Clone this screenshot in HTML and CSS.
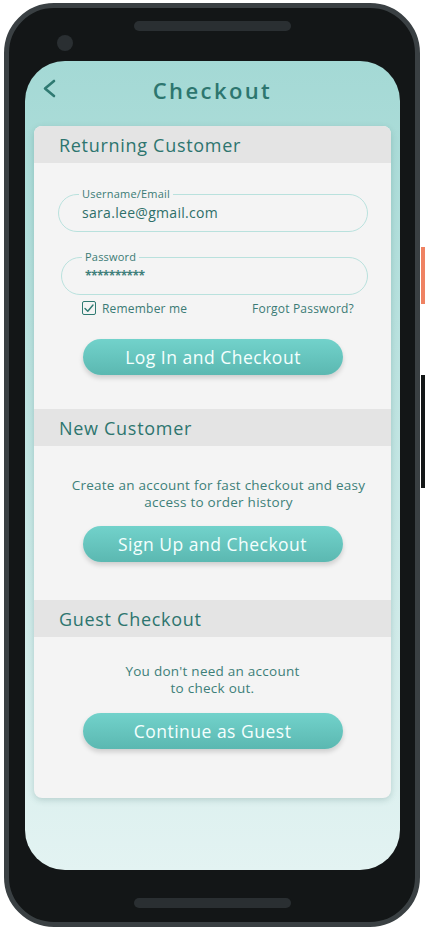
FILE: index.html
```html
<!DOCTYPE html>
<html lang="en">
<head>
<meta charset="utf-8">
<title>Checkout</title>
<link rel="stylesheet" href="styles.css">
</head>
<body>
<div class="phone">
  <div class="side-btn side-btn--power"></div>
  <div class="side-btn side-btn--volume"></div>
  <div class="bezel bezel--top">
    <div class="speaker"></div>
    <div class="camera"></div>
  </div>
  <div class="screen">
    <header class="app-header">
      <button class="back" aria-label="Back">
        <svg width="14" height="20" viewBox="0 0 14 20"><path d="M12 2 L3 9.5 L12 17" fill="none" stroke="#2f7a72" stroke-width="2.6" stroke-linecap="round" stroke-linejoin="round"/></svg>
      </button>
      <h1 class="title">Checkout</h1>
      <span></span>
    </header>
    <main class="card">
      <section class="section">
        <h2 class="section-head">Returning Customer</h2>
        <div class="section-body section-body--login">
          <fieldset class="field">
            <legend class="field-label">Username/Email</legend>
            <div class="field-value">sara.lee@gmail.com</div>
          </fieldset>
          <fieldset class="field field--password">
            <legend class="field-label">Password</legend>
            <div class="field-value field-value--stars">**********</div>
          </fieldset>
          <div class="options">
            <label class="remember">
              <span class="checkbox">
                <svg width="10" height="9" viewBox="0 0 10 9"><path d="M1 4.5 L3.8 7.3 L9 1" fill="none" stroke="#2f7a72" stroke-width="1.4" stroke-linecap="round" stroke-linejoin="round"/></svg>
              </span>
              Remember me
            </label>
            <a class="forgot">Forgot Password?</a>
          </div>
          <button class="cta">Log In and Checkout</button>
        </div>
      </section>
      <section class="section">
        <h2 class="section-head">New Customer</h2>
        <div class="section-body section-body--new">
          <p class="note note--new">Create an account for fast checkout and easy<br>access to order history</p>
          <button class="cta">Sign Up and Checkout</button>
        </div>
      </section>
      <section class="section">
        <h2 class="section-head">Guest Checkout</h2>
        <div class="section-body section-body--guest">
          <p class="note">You don't need an account<br>to check out.</p>
          <button class="cta">Continue as Guest</button>
        </div>
      </section>
    </main>
  </div>
  <div class="bezel bezel--bottom">
    <div class="speaker speaker--bottom"></div>
  </div>
</div>
</body>
</html>
```

FILE: styles.css
```css
* { box-sizing: border-box; }

body {
  margin: 0;
  background: #ffffff;
  font-family: "Open Sans", "DejaVu Sans", sans-serif;
}

.phone {
  position: relative;
  margin: 3px 0 0 4px;
  width: 416px;
  height: 924px;
  border: 5px solid #3a4043;
  border-radius: 50px;
  background: #131617;
  padding: 0 15px 0 16px;
  display: flex;
  flex-direction: column;
}

.side-btn {
  position: absolute;
  left: 412px;
  width: 8px;
  border-radius: 0 2px 2px 0;
}
.side-btn--power { top: 239px; height: 57px; background: #ef8262; }
.side-btn--volume { top: 367px; height: 113px; background: #131617; }

.bezel {
  position: relative;
  display: flex;
  justify-content: center;
  flex: none;
}
.bezel--top { height: 53px; padding-top: 13px; }
.bezel--bottom { height: 52px; padding-top: 28px; }

.speaker {
  width: 157px;
  height: 10px;
  border-radius: 5px;
  background: #2a2f32;
}

.camera {
  position: absolute;
  left: 32px;
  top: 27px;
  width: 16px;
  height: 16px;
  border-radius: 50%;
  background: #2a2f32;
}

.screen {
  height: 809px;
  flex: none;
  border-radius: 40px;
  overflow: hidden;
  background: linear-gradient(to bottom, #a4d9d5 0%, #e3f3f2 100%);
  display: flex;
  flex-direction: column;
}

.app-header {
  height: 65px;
  flex: none;
  display: grid;
  grid-template-columns: 50px 1fr 50px;
  align-items: center;
  padding-bottom: 8px;
}

.back {
  border: 0;
  background: none;
  padding: 0 0 0 17px;
  margin: 0;
  display: flex;
  align-items: center;
  height: 20px;
  margin-top: -2px;
}

.title {
  margin: 0;
  text-align: center;
  font-size: 22px;
  font-weight: 600;
  letter-spacing: 2.4px;
  color: #2d766f;
}

.card {
  margin: 0 9px;
  background: #f4f4f4;
  border-radius: 8px;
  box-shadow: 0 2px 6px rgba(40, 90, 86, 0.22);
  overflow: hidden;
}

.section-head {
  margin: 0;
  height: 37px;
  display: flex;
  align-items: center;
  padding-left: 25px;
  background: #e4e4e4;
  font-size: 18px;
  font-weight: 500;
  letter-spacing: 0.7px;
  color: #2d756f;
}

.section-body {
  display: flex;
  flex-direction: column;
}

.section-body--login { padding: 25px 23px 34px 24px; }
.section-body--new { padding: 31px 0 38px; align-items: center; }
.section-body--guest { padding: 26px 0 49px; align-items: center; }

.field {
  margin: 0;
  border: 1px solid #b9e1dd;
  border-radius: 19px;
  padding: 3px 12px 8px 20px;
  min-width: 0;
}
.field--password { margin-top: 19px; margin-left: 3px; }

.field-label {
  padding: 0 3px;
  font-size: 11px;
  line-height: 12px;
  color: #3b7b75;
  letter-spacing: 0.2px;
}

.field-value {
  height: 20px;
  line-height: 20px;
  padding-left: 3px;
  font-size: 14px;
  color: #2e6f69;
  letter-spacing: 0.3px;
}
.field-value--stars {
  font-size: 12px;
  font-weight: 700;
  letter-spacing: -0.6px;
  color: #3f7f7a;
}

.options {
  margin-top: 6px;
  padding: 0 14px 0 24px;
  height: 14px;
  display: flex;
  justify-content: space-between;
  align-items: center;
  font-size: 12px;
  color: #3b7b75;
  letter-spacing: 0.2px;
}

.remember {
  display: flex;
  align-items: center;
  gap: 6px;
}

.checkbox {
  width: 14px;
  height: 14px;
  border: 1.5px solid #2f7a72;
  border-radius: 2px;
  display: flex;
  align-items: center;
  justify-content: center;
}

.forgot { color: #3b7b75; }

.cta {
  align-self: center;
  width: 260px;
  height: 36px;
  border: 0;
  border-radius: 18px;
  background: linear-gradient(to bottom, #72d2cb 0%, #5bb8b1 100%);
  box-shadow: 0 3px 5px rgba(0, 0, 0, 0.16);
  color: #f4fffe;
  font-family: inherit;
  font-size: 17.5px;
  font-weight: 500;
  letter-spacing: 0.5px;
  padding: 0;
}
.section-body--login .cta { margin-top: 24px; }
.section-body--new .cta { margin-top: 15px; }
.section-body--guest .cta { margin-top: 16px; }

.note {
  margin: 0;
  text-align: center;
  font-size: 13.5px;
  line-height: 17px;
  color: #3d7f79;
  letter-spacing: 0.25px;
  white-space: nowrap;
}
.note--new { padding-left: 12px; }
```
